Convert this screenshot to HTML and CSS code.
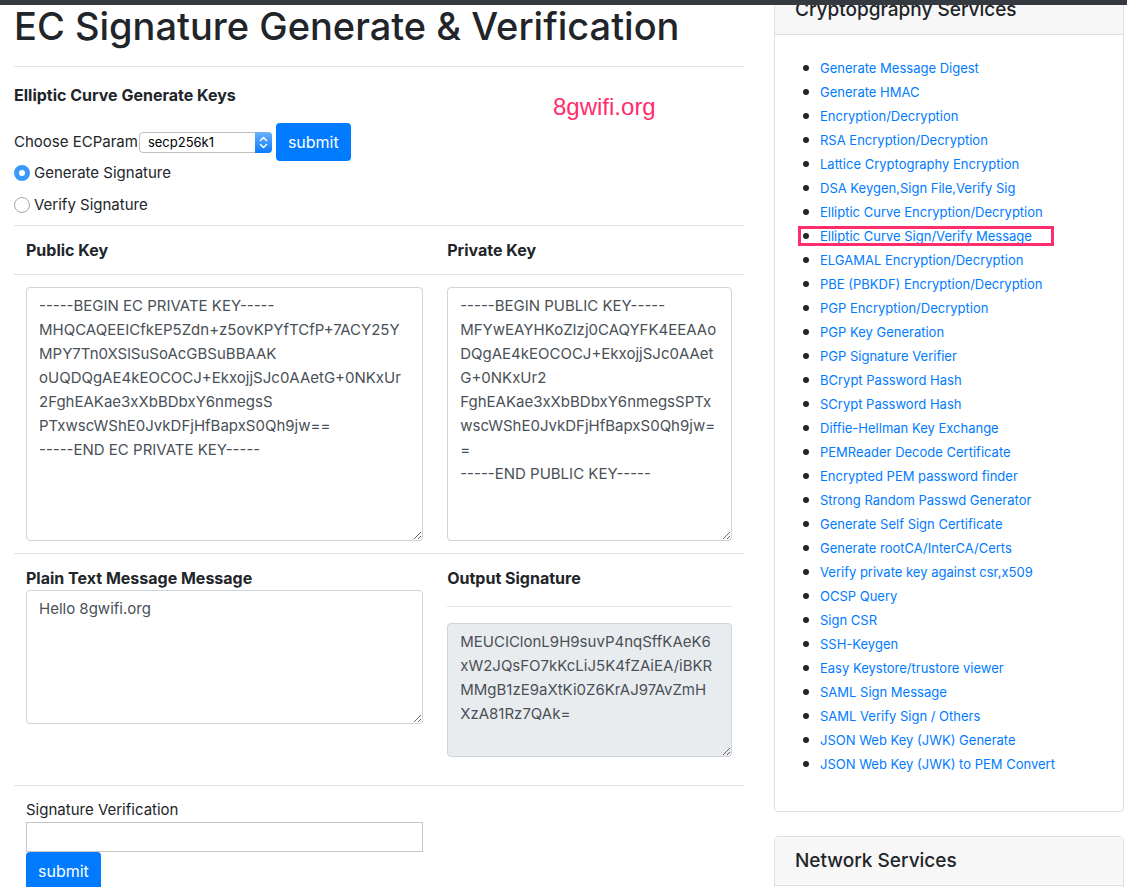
FILE: index.html
```html
<!DOCTYPE html>
<html lang="en">
<head>
<meta charset="utf-8">
<meta name="viewport" content="width=device-width, initial-scale=1">
<title>EC Signature Generate &amp; Verification</title>
<link rel="stylesheet" href="styles.css">
</head>
<body>
<header class="navbar"></header>
<div class="page">
  <main class="content">
    <h1 class="title">EC Signature Generate &amp; Verification</h1>
    <hr class="rule">
    <form class="form">
      <p class="lead">Elliptic Curve Generate Keys</p>
      <div class="param-row">
        <label for="ecparam">Choose ECParam</label>
        <span class="select-wrap">
          <select id="ecparam" class="select"><option>secp256k1</option></select>
          <svg class="select-arrows" viewBox="0 0 17 21" aria-hidden="true"><path d="M5.500 8.500L8.500 5.500L11.500 8.500M5.500 12.500L8.500 15.500L11.500 12.500"/></svg>
        </span>
        <button type="button" class="btn">submit</button>
      </div>
      <div class="radio-row"><input class="radio" type="radio" name="mode" id="generate" checked><label for="generate">Generate Signature</label></div>
      <div class="radio-row"><input class="radio" type="radio" name="mode" id="verify"><label for="verify">Verify Signature</label></div>
      <table class="table">
        <tr><th class="col-wide"><label for="public-key">Public Key</label></th><th><label for="private-key">Private Key</label></th></tr>
        <tr>
          <td><textarea id="public-key" class="area area-tall" spellcheck="false">-----BEGIN EC PRIVATE KEY-----
MHQCAQEEICfkEP5Zdn+z5ovKPYfTCfP+7ACY25Y
MPY7Tn0XSlSuSoAcGBSuBBAAK
oUQDQgAE4kEOCOCJ+EkxojjSJc0AAetG+0NKxUr
2FghEAKae3xXbBDbxY6nmegsS
PTxwscWShE0JvkDFjHfBapxS0Qh9jw==
-----END EC PRIVATE KEY-----</textarea></td>
          <td><textarea id="private-key" class="area area-tall" spellcheck="false">-----BEGIN PUBLIC KEY-----
MFYwEAYHKoZIzj0CAQYFK4EEAAo
DQgAE4kEOCOCJ+EkxojjSJc0AAet
G+0NKxUr2
FghEAKae3xXbBDbxY6nmegsSPTx
wscWShE0JvkDFjHfBapxS0Qh9jw=
=
-----END PUBLIC KEY-----</textarea></td>
        </tr>
        <tr>
          <td><label class="strong" for="message">Plain Text Message Message</label><textarea id="message" class="area" spellcheck="false">Hello 8gwifi.org</textarea></td>
          <td><label class="strong" for="output">Output Signature</label><hr class="rule"><textarea id="output" class="area area-output" readonly spellcheck="false">MEUCIClonL9H9suvP4nqSffKAeK6
xW2JQsFO7kKcLiJ5K4fZAiEA/iBKR
MMgB1zE9aXtKi0Z6KrAJ97AvZmH
XzA81Rz7QAk=</textarea></td>
        </tr>
        <tr>
          <td><label class="block" for="signature">Signature Verification</label><input id="signature" class="text-input" type="text"><button type="button" class="btn">submit</button></td>
          <td></td>
        </tr>
      </table>
    </form>
    <span class="watermark">8gwifi.org</span>
  </main>
  <aside class="sidebar">
    <section class="card">
      <h2 class="card-header">Cryptopgraphy Services</h2>
      <ul class="links">
        <li><a href="#">Generate Message Digest</a></li>
        <li><a href="#">Generate HMAC</a></li>
        <li><a href="#">Encryption/Decryption</a></li>
        <li><a href="#">RSA Encryption/Decryption</a></li>
        <li><a href="#">Lattice Cryptography Encryption</a></li>
        <li><a href="#">DSA Keygen,Sign File,Verify Sig</a></li>
        <li><a href="#">Elliptic Curve Encryption/Decryption</a></li>
        <li class="marked"><a href="#">Elliptic Curve Sign/Verify Message</a></li>
        <li><a href="#">ELGAMAL Encryption/Decryption</a></li>
        <li><a href="#">PBE (PBKDF) Encryption/Decryption</a></li>
        <li><a href="#">PGP Encryption/Decryption</a></li>
        <li><a href="#">PGP Key Generation</a></li>
        <li><a href="#">PGP Signature Verifier</a></li>
        <li><a href="#">BCrypt Password Hash</a></li>
        <li><a href="#">SCrypt Password Hash</a></li>
        <li><a href="#">Diffie-Hellman Key Exchange</a></li>
        <li><a href="#">PEMReader Decode Certificate</a></li>
        <li><a href="#">Encrypted PEM password finder</a></li>
        <li><a href="#">Strong Random Passwd Generator</a></li>
        <li><a href="#">Generate Self Sign Certificate</a></li>
        <li><a href="#">Generate rootCA/InterCA/Certs</a></li>
        <li><a href="#">Verify private key against csr,x509</a></li>
        <li><a href="#">OCSP Query</a></li>
        <li><a href="#">Sign CSR</a></li>
        <li><a href="#">SSH-Keygen</a></li>
        <li><a href="#">Easy Keystore/trustore viewer</a></li>
        <li><a href="#">SAML Sign Message</a></li>
        <li><a href="#">SAML Verify Sign / Others</a></li>
        <li><a href="#">JSON Web Key (JWK) Generate</a></li>
        <li><a href="#">JSON Web Key (JWK) to PEM Convert</a></li>
      </ul>
    </section>
    <section class="card">
      <h2 class="card-header">Network Services</h2>
      <div class="card-body"></div>
    </section>
  </aside>
</div>
</body>
</html>
```

FILE: styles.css
```css
*, *::before, *::after { box-sizing: border-box; }

body {
  margin: 0;
  height: 100vh;
  overflow: hidden;
  background: #fff;
  color: #212529;
  font: 15px/24px Inter, "Liberation Sans", sans-serif;
}

.navbar {
  position: fixed;
  top: 0;
  left: 0;
  right: 0;
  z-index: 2;
  height: 5px;
  background: #343a40;
}

.page {
  display: grid;
  grid-template-columns: 73fr 35fr;
  gap: 30px;
  align-items: start;
  padding: 2px 3px 0 14px;
}

.content { position: relative; min-width: 0; }

.title {
  margin: 0;
  font-size: 38px;
  font-weight: 500;
  line-height: 48px;
  white-space: nowrap;
}

.rule {
  margin: 16px 0;
  border: 0;
  border-top: 1px solid #e3e4e5;
}

.lead { margin: 0 0 16px; font-size: 16px; font-weight: 700; }
.strong { display: block; font-size: 16px; font-weight: 700; }
.block { display: block; }

.param-row { display: flex; align-items: center; }

.select-wrap {
  position: relative;
  display: block;
  width: 133px;
  height: 21px;
  margin: 0 4px 0 1px;
}

.select {
  display: block;
  width: 100%;
  height: 100%;
  padding: 0 20px 0 8px;
  border: 1px solid #c0c0c0;
  border-radius: 4px;
  background: #fff;
  color: #000;
  font: 13px/19px Inter, "Liberation Sans", sans-serif;
  appearance: none;
}

.select-arrows {
  position: absolute;
  top: 0;
  right: 0;
  width: 17px;
  height: 21px;
  border-radius: 0 4px 4px 0;
  background: linear-gradient(#6bb2fb, #0a7bfe);
  fill: none;
  stroke: #fff;
  stroke-width: 1.5;
  stroke-linecap: round;
  stroke-linejoin: round;
  pointer-events: none;
}

.btn {
  display: block;
  height: 38px;
  padding: 0 12px;
  border: 0;
  border-radius: 4px;
  background: #007bff;
  color: #fff;
  font: 16px/24px Inter, "Liberation Sans", sans-serif;
}

.radio-row {
  display: flex;
  align-items: center;
  gap: 4px;
  margin-bottom: 8px;
}

.radio {
  width: 16px;
  height: 16px;
  margin: 0;
  border: 1px solid #a8a8a8;
  border-radius: 50%;
  background: #fff;
  appearance: none;
}

.radio:checked { border: 5px solid #3b99fc; }

.table {
  width: 100%;
  table-layout: fixed;
  border-spacing: 0;
}

.table th, .table td {
  padding: 12px;
  border-top: 1px solid #dee2e6;
  text-align: left;
  vertical-align: top;
}

.table th { font-size: 16px; }
.col-wide { width: 57.7%; }

.area {
  display: block;
  width: 100%;
  height: 134px;
  padding: 6px 12px;
  border: 1px solid #ced4da;
  border-radius: 4px;
  background: #fff;
  color: #495057;
  font: inherit;
  white-space: pre;
  overflow: hidden;
  resize: both;
}

.area-tall { height: 254px; }
.area-output { margin-bottom: 16px; background: #e9ecef; }

.text-input {
  display: block;
  width: 100%;
  height: 30px;
  padding: 0 4px;
  border: 1px solid #c6c6c6;
  font: inherit;
}

.watermark {
  position: absolute;
  top: 90px;
  left: 539px;
  color: #ff2d6c;
  font: 24px/30px "Liberation Sans", sans-serif;
}

.sidebar { margin-top: -17px; min-width: 0; }

.card {
  margin-bottom: 24px;
  border: 1px solid #dfdfdf;
  border-radius: 4px;
}

.card-header {
  margin: 0;
  padding: 12px 20px;
  border-bottom: 1px solid #dfdfdf;
  background: #f7f7f7;
  font-size: 19px;
  font-weight: 500;
  line-height: 24px;
}

.card-body { padding: 20px; }

.links {
  margin: 0;
  padding: 21px 20px 35px 28px;
  list-style: none;
  font-size: 13px;
}

.links li {
  display: flex;
  align-items: center;
  gap: 11px;
}

.links li::before {
  content: "";
  width: 6px;
  height: 6px;
  border-radius: 50%;
  background: #212529;
}

.links a { color: #007bff; text-decoration: none; }
.marked { position: relative; }

.marked::after {
  content: "";
  position: absolute;
  top: 2px;
  left: -5px;
  width: 256px;
  height: 20px;
  border: 3px solid #ff2d6c;
  pointer-events: none;
}
```
